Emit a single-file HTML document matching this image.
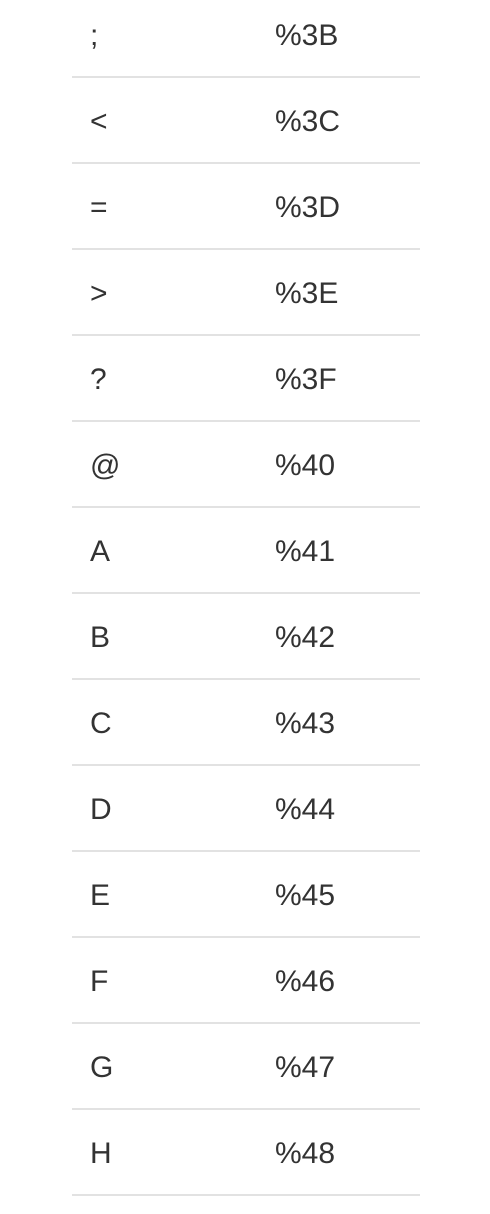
<!DOCTYPE html>
<html><head><style>
html,body{margin:0;padding:0;background:#fff;width:490px;height:1214px;overflow:hidden}
body{font-family:"Liberation Sans",sans-serif;color:#333;font-size:30px}
.t{position:absolute;top:-8px;left:72px;width:348px}
.r{height:84px;line-height:88px;border-bottom:2px solid #e2e2e2;position:relative}
.a{position:absolute;left:18px}
.b{position:absolute;left:203px}
</style></head><body><div class="t">
<div class="r"><span class="a">;</span><span class="b">%3B</span></div>
<div class="r"><span class="a">&lt;</span><span class="b">%3C</span></div>
<div class="r"><span class="a">=</span><span class="b">%3D</span></div>
<div class="r"><span class="a">&gt;</span><span class="b">%3E</span></div>
<div class="r"><span class="a">?</span><span class="b">%3F</span></div>
<div class="r"><span class="a">@</span><span class="b">%40</span></div>
<div class="r"><span class="a">A</span><span class="b">%41</span></div>
<div class="r"><span class="a">B</span><span class="b">%42</span></div>
<div class="r"><span class="a">C</span><span class="b">%43</span></div>
<div class="r"><span class="a">D</span><span class="b">%44</span></div>
<div class="r"><span class="a">E</span><span class="b">%45</span></div>
<div class="r"><span class="a">F</span><span class="b">%46</span></div>
<div class="r"><span class="a">G</span><span class="b">%47</span></div>
<div class="r"><span class="a">H</span><span class="b">%48</span></div>
</div></body></html>
